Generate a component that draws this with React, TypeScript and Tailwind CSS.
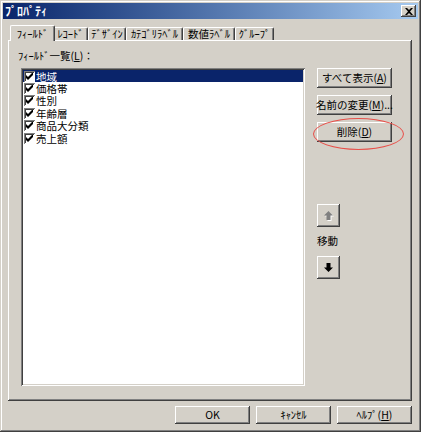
import React from "react"

const raised =
  "bg-[#d4d0c8] shadow-[inset_-1px_-1px_0_#404040,inset_1px_1px_0_#ffffff,inset_-2px_-2px_0_#808080]"
const sunken =
  "shadow-[inset_1px_1px_0_#808080,inset_-1px_-1px_0_#ffffff,inset_2px_2px_0_#404040,inset_-2px_-2px_0_#d4d0c8]"

const fields = ["地域", "価格帯", "性別", "年齢層", "商品大分類", "売上額"]

const tabs = [
  { label: "ﾌｨｰﾙﾄﾞ", w: "w-[45px]", active: true },
  { label: "ﾚｺｰﾄﾞ", w: "w-[35px]" },
  { label: "ﾃﾞｻﾞｲﾝ", w: "w-[38px]" },
  { label: "ｶﾃｺﾞﾘﾗﾍﾞﾙ", w: "w-[57px]" },
  { label: "数値ﾗﾍﾞﾙ", w: "w-[52px]" },
  { label: "ｸﾞﾙｰﾌﾟ", w: "w-[39px]" },
]

function Check() {
  return (
    <span className="w-[11px] h-[11px] bg-white shrink-0 flex items-center justify-center shadow-[inset_1px_1px_0_#808080,inset_-1px_-1px_0_#ffffff,inset_2px_2px_0_#404040]">
      <svg width="7" height="7" viewBox="0 0 7 7">
        <path d="M0 2v3l2 2 5-5V-1L2 4z" fill="#000" />
      </svg>
    </span>
  )
}

function Btn({ children, className = "" }: { children: React.ReactNode; className?: string }) {
  return (
    <div
      className={`${raised} w-[75px] flex items-center justify-center whitespace-nowrap text-[10.5px] leading-[12px] text-black ${className}`}
    >
      {children}
    </div>
  )
}

export default function App() {
  return (
    <div className="w-[421px] h-[432px] bg-[#d4d0c8] p-[3px] flex flex-col text-[10.5px] leading-[12px] font-['Noto_Sans_CJK_JP','Noto_Sans',sans-serif] shadow-[inset_-1px_-1px_0_#404040,inset_1px_1px_0_#d4d0c8,inset_-2px_-2px_0_#808080,inset_2px_2px_0_#ffffff]">
      {/* title bar */}
      <div className="h-[16px] flex items-center justify-between bg-gradient-to-r from-[#0a246a] to-[#a6caf0] px-[2px]">
        <span className="text-white font-bold text-[12px] leading-[14px]">ﾌﾟﾛﾊﾟﾃｨ</span>
        <div className={`${raised} w-[15px] h-[12px] flex items-center justify-center`}>
          <svg width="8" height="7" viewBox="0 0 8 7">
            <path d="M0 0h2l2 2 2-2h2L5 3.5 8 7H6L4 5 2 7H0l3-3.5z" fill="#000" />
          </svg>
        </div>
      </div>

      <div className="pl-[5px] pr-[6px] pt-[6px] flex flex-col">
        {/* tabs */}
        <div className="h-[15px] flex items-end pl-[4px]">
          {tabs.map((t) =>
            t.active ? (
              <div
                key={t.label}
                className={`${t.w} h-[16px] -mx-[2px] -mb-px z-10 relative bg-[#d4d0c8] border-t border-l border-white border-r border-r-[#404040] rounded-t-[2px] shadow-[inset_-1px_0_0_#808080] flex items-center justify-center whitespace-nowrap text-black`}
              >
                {t.label}
              </div>
            ) : (
              <div
                key={t.label}
                className={`${t.w} h-[13px] bg-[#d4d0c8] border-t border-l border-white border-r border-r-[#404040] rounded-t-[2px] shadow-[inset_-1px_0_0_#808080] flex items-center justify-center whitespace-nowrap text-black`}
              >
                {t.label}
              </div>
            )
          )}
        </div>

        {/* panel */}
        <div className={`${raised} h-[361px] flex`}>
          <div className="pl-[10px] pt-[9px] flex flex-col">
            <div className="h-[14px] flex items-center text-black">
              ﾌｨｰﾙﾄﾞ一覧(<span className="underline">L</span>)：
            </div>
            <div className={`ml-[3px] mt-[5px] w-[284px] h-[318px] bg-white ${sunken} p-[2px]`}>
              {fields.map((f, i) => (
                <div
                  key={f}
                  className={`h-[12.4px] flex items-center pl-[1px] gap-[1px] ${
                    i === 0 ? "bg-[#0a246a] text-white" : "text-black"
                  }`}
                >
                  <Check />
                  <span className="text-[10.5px] leading-[11px]">{f}</span>
                </div>
              ))}
            </div>
          </div>

          <div className="ml-[12px] pt-[28px] flex flex-col">
            <Btn className="h-[20px]">
              すべて表示(<span className="underline">A</span>)
            </Btn>
            <Btn className="h-[20px] mt-[7px]">
              名前の変更(<span className="underline">M</span>)...
            </Btn>
            <div className="relative mt-[7px]">
              <Btn className="h-[20px]">
                削除(<span className="underline">D</span>)
              </Btn>
              <div className="absolute left-[-4px] top-[-4px] w-[91px] h-[32px] rounded-[50%] border-[1.5px] border-[#e8504a]" />
            </div>

            <div className={`${raised} w-[23px] h-[23px] mt-[62px] flex items-center justify-center`}>
              <svg width="10" height="10" viewBox="0 0 10 10">
                <path d="M4.5 0 9 4.5H6.5V9h-4V4.5H0z" fill="#fff" transform="translate(1 1)" />
                <path d="M4.5 0 9 4.5H6.5V9h-4V4.5H0z" fill="#808080" />
              </svg>
            </div>
            <div className="h-[12px] mt-[8px] flex items-center text-black">移動</div>
            <div className={`${raised} w-[23px] h-[23px] mt-[9px] flex items-center justify-center`}>
              <svg width="9" height="9" viewBox="0 0 9 9">
                <path d="M4.5 9 9 4.5H6.5V0h-4v4.5H0z" fill="#000" />
              </svg>
            </div>
          </div>
        </div>

        {/* bottom buttons */}
        <div className="mt-[5px] flex justify-end gap-[6px]">
          <Btn className="h-[18px]">OK</Btn>
          <Btn className="h-[18px]">ｷｬﾝｾﾙ</Btn>
          <Btn className="h-[18px]">
            ﾍﾙﾌﾟ(<span className="underline">H</span>)
          </Btn>
        </div>
      </div>
    </div>
  )
}
